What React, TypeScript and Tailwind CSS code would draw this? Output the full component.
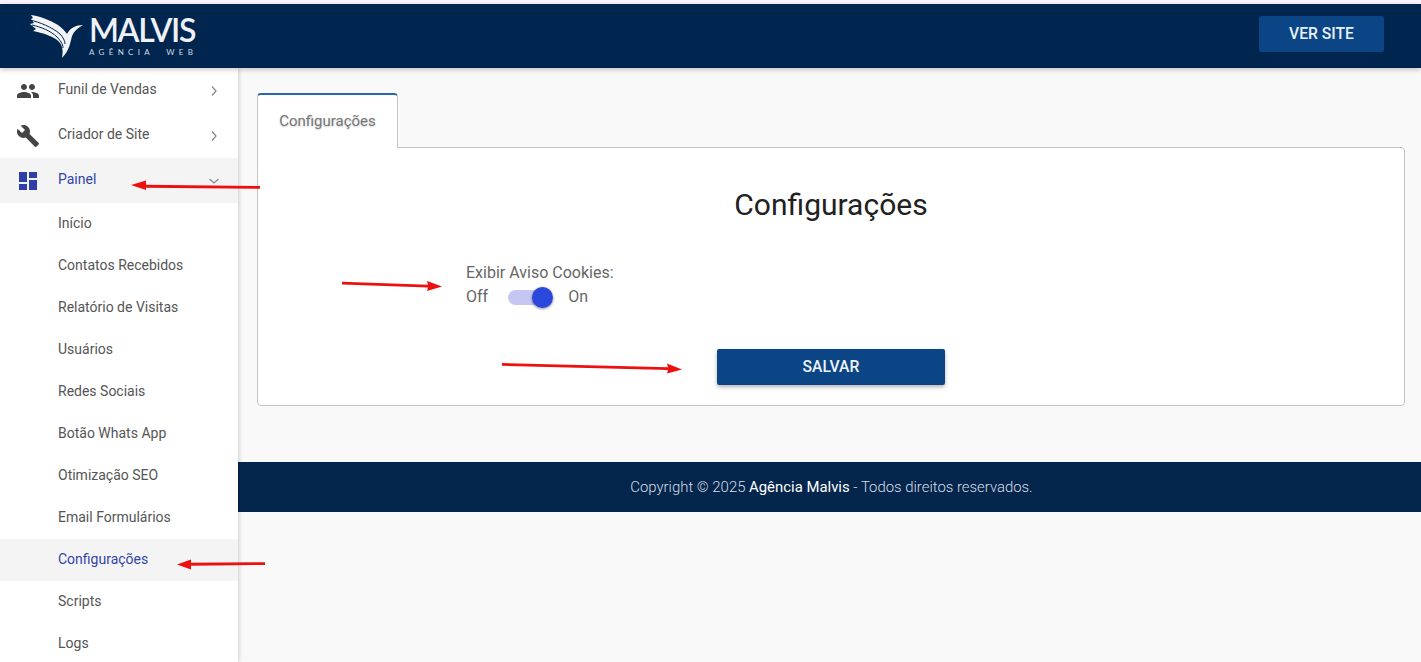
import React from "react";

const font = { fontFamily: "Roboto, 'Liberation Sans', sans-serif" };

function Chevron({ down = false, className = "" }: { down?: boolean; className?: string }) {
  return (
    <svg width="12" height="12" viewBox="0 0 12 12" className={className} fill="none" stroke="#8a8a8a" strokeWidth="1.3">
      {down ? <path d="M1.5 4l4.5 4 4.5-4" /> : <path d="M4 1.5l4 4.5-4 4.5" />}
    </svg>
  );
}

function Icon({ d, color, size = 24 }: { d: string; color: string; size?: number }) {
  return (
    <svg width={size} height={size} viewBox="0 0 24 24" fill={color}>
      <path d={d} />
    </svg>
  );
}

const people =
  "M16 11c1.66 0 2.99-1.34 2.99-3S17.66 5 16 5c-1.66 0-3 1.34-3 3s1.34 3 3 3zm-8 0c1.66 0 2.99-1.34 2.99-3S9.66 5 8 5C6.34 5 5 6.34 5 8s1.34 3 3 3zm0 2c-2.33 0-7 1.17-7 3.5V19h14v-2.5c0-2.33-4.67-3.5-7-3.5zm8 0c-.29 0-.62.02-.97.05 1.16.84 1.97 1.97 1.97 3.45V19h6v-2.5c0-2.33-4.67-3.5-7-3.5z";
const build =
  "M22.7 19l-9.1-9.1c.9-2.3.4-5-1.5-6.9-2-2-5-2.4-7.4-1.3L9 6 6 9 1.6 4.7C.4 7.1.9 10.1 2.9 12.1c1.9 1.9 4.6 2.4 6.9 1.5l9.1 9.1c.4.4 1 .4 1.4 0l2.3-2.3c.5-.4.5-1.1.1-1.4z";
const dashboard = "M3 13h8V3H3v10zm0 8h8v-6H3v6zm10 0h8V11h-8v10zm0-18v6h8V3h-8z";

const subItems = [
  "Início",
  "Contatos Recebidos",
  "Relatório de Visitas",
  "Usuários",
  "Redes Sociais",
  "Botão Whats App",
  "Otimização SEO",
  "Email Formulários",
  "Configurações",
  "Scripts",
  "Logs",
];

function TopItem({ d, label, active = false }: { d: string; label: string; active?: boolean }) {
  return (
    <div className={`flex h-[45px] items-center pl-4 pr-[18px] ${active ? "bg-[#f4f4f4]" : ""}`}>
      <div className="w-[42px] shrink-0">
        <Icon d={d} color={active ? "#2f3fa8" : "#444444"} />
      </div>
      <span className={`flex-1 pb-[2px] text-[14px] ${active ? "text-[#3344aa]" : "text-[#555555]"}`}>{label}</span>
      <Chevron down={active} />
    </div>
  );
}

function Logo() {
  return (
    <div className="flex items-start gap-[5px]">
      <svg width="54" height="45" viewBox="0 0 54 45" className="shrink-0">
        <path d="M1 1C9 2 20 6 28 11c4 3 7 6 9 9 3-6 9-9 16-9-5 3-9 6-11 11-2 8-3 15-10 22 1-6 1-11-2-15C25 22 12 19 3 17l3-2-6-5 4-1-3-4 2-1z" fill="#f1f3f6" />
        <path d="M0 6c9 2 22 7 30 14 3 3 5 7 5 10" fill="none" stroke="#00264f" strokeWidth="1" />
        <path d="M2 11c9 2 19 6 25 12 3 3 6 7 6 11" fill="none" stroke="#00264f" strokeWidth="1" />
      </svg>
      <div className="mt-[4px] flex flex-col items-start">
        <span className="text-[32px] leading-[24px] font-semibold text-[#eef1f5] tracking-[-1.4px]" style={{ fontFamily: "Lato, sans-serif" }}>
          MALVIS
        </span>
        <span className="mt-[5px] whitespace-pre text-[8px] leading-[10px] tracking-[4.3px] text-[#d5dbe3]" style={{ fontFamily: "Lato, sans-serif" }}>
          AGÊNCIA  WEB
        </span>
      </div>
    </div>
  );
}

export default function App() {
  return (
    <div className="relative flex h-[662px] w-full flex-col overflow-hidden bg-[#f9f9f9]" style={font}>
      <div className="h-1 shrink-0 bg-[#fbf3fb]" />
      <header className="z-20 flex h-16 shrink-0 items-center justify-between bg-[#00264f] pl-[30px] pr-[37px] shadow-[0_2px_5px_rgba(0,0,0,0.2)]">
        <Logo />
        <button className="mb-1 flex h-9 w-[125px] items-center justify-center rounded-[2px] bg-[#0c4585] text-[15.7px] font-medium text-[#e8f0fa]">
          VER SITE
        </button>
      </header>
      <div className="flex min-h-0 flex-1">
        <aside className="z-10 w-[238px] shrink-0 bg-white shadow-[0_0_5px_rgba(0,0,0,0.25)]">
          <TopItem d={people} label="Funil de Vendas" />
          <TopItem d={build} label="Criador de Site" />
          <TopItem d={dashboard} label="Painel" active />
          {subItems.map((s) => (
            <div
              key={s}
              className={`flex h-[42px] items-center pb-[2px] pl-[58px] text-[14px] ${
                s === "Configurações" ? "bg-[#f4f4f4] text-[#3344aa]" : "text-[#555555]"
              }`}
            >
              {s}
            </div>
          ))}
        </aside>
        <main className="min-w-0 flex-1">
          <div className="px-4 pl-[19px] pt-[25px]">
            <div className="relative z-10 -mb-px flex h-[55px] w-[141px] items-center justify-center rounded-t-[4px] border border-b-0 border-[#c4c4c4] border-t-2 border-t-[#2a66a8] bg-white text-[15px] text-[#777777] [text-shadow:0_1px_2px_rgba(0,0,0,0.2)]">
              Configurações
            </div>
            <section className="flex h-[259px] flex-col items-center rounded-b-[4px] rounded-tr-[4px] border border-[#c4c4c4] bg-white">
              <h1 className="mt-[39px] text-[30px] leading-[36px] font-normal text-[#212121]">Configurações</h1>
              <div className="mt-[38px] mr-[582px] w-[148px] whitespace-nowrap text-[16px] leading-6 text-[#666666]">
                <div>Exibir Aviso Cookies:</div>
                <div className="flex items-center">
                  <span>Off</span>
                  <span className="relative ml-[20px] mr-[20px] block h-[15px] w-[40px] rounded-full bg-[#c5c7f2]">
                    <span className="absolute -top-[3px] left-[24px] h-[21px] w-[21px] rounded-full bg-[#2b48dc] shadow-[0_1px_3px_rgba(0,0,0,0.45)]" />
                  </span>
                  <span>On</span>
                </div>
              </div>
              <button className="mt-[40px] flex h-9 w-[228px] items-center justify-center rounded-[2px] bg-[#0c4585] text-[15.7px] font-medium text-[#eef3fa] shadow-[0_2px_4px_rgba(0,0,0,0.3)]">
                SALVAR
              </button>
            </section>
          </div>
          <footer className="mt-[56px] flex h-[50px] items-center justify-center bg-[#04264c] pl-1 text-[14.9px] font-light text-[#d6dde6]">
            <span>
              Copyright © 2025 <span className="font-normal text-white">Agência Malvis</span> - Todos direitos reservados.
            </span>
          </footer>
        </main>
      </div>
      <svg className="pointer-events-none absolute left-0 top-0 z-30" width="1421" height="662" fill="#ee0f0f" stroke="none">
        <path d="M260 186 L146 184.8 L146 180.5 L131 185 L146 190 L146 187.8 L260 188.8 Z" />
        <path d="M342 281.8 L428 284.8 L427 281 L442 286.5 L427 291 L428 287.4 L342 284.6 Z" />
        <path d="M502 363 L668 367.3 L667 363.5 L682 369.5 L667 373.5 L668 370 L502 365.8 Z" />
        <path d="M265 562.2 L191 562.8 L191 559.5 L177 564.5 L191 569.5 L191 565.7 L265 564.9 Z" />
      </svg>
    </div>
  );
}
